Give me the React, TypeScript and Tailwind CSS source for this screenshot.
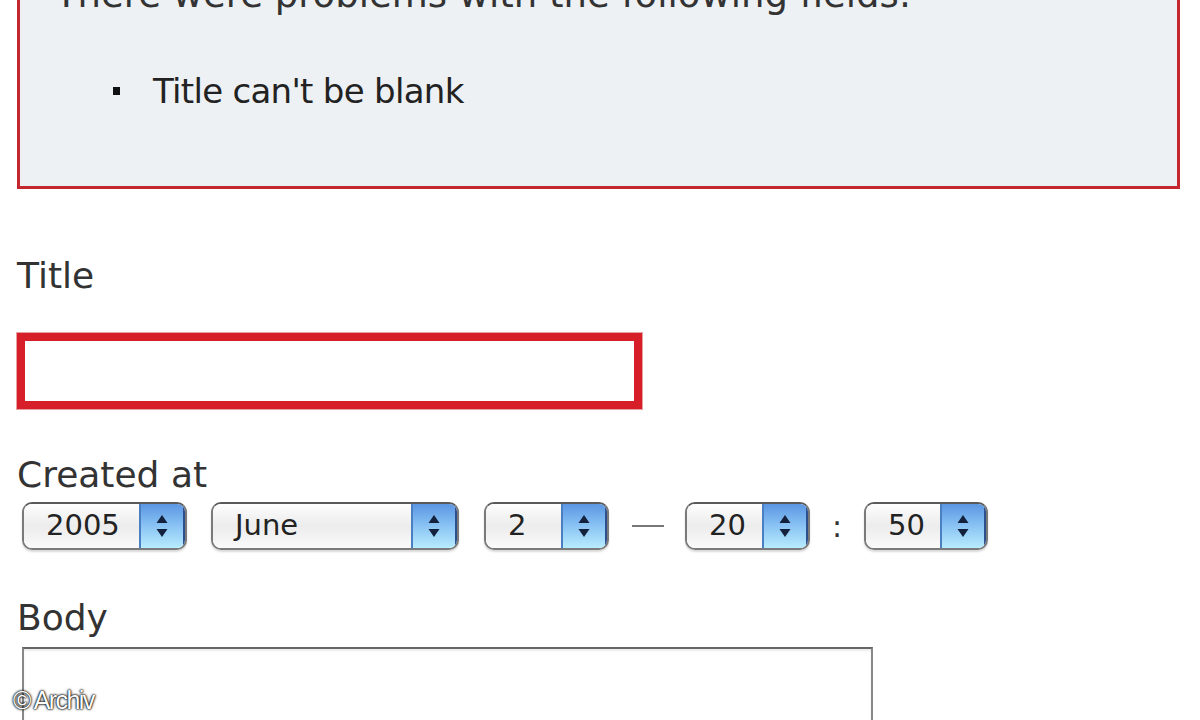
import React from "react";

function Arrows() {
  return (
    <svg width="14" height="24" viewBox="0 0 14 24" aria-hidden="true">
      <path d="M7 1 L12.5 9 L1.5 9 Z" fill="#14213c" />
      <path d="M7 23 L12.5 15 L1.5 15 Z" fill="#14213c" />
    </svg>
  );
}

function Select({ value, width }: { value: string; width: string }) {
  return (
    <div
      className={`${width} h-[48px] flex items-stretch rounded-[10px] border-2 border-[#7a7a7a] border-t-[#5a5a5a] overflow-hidden shadow-[0_2px_2px_rgba(0,0,0,0.15)]`}
    >
      <div className="flex-1 flex items-center pl-[22px] bg-gradient-to-b from-[#fdfdfd] via-[#ececec] to-[#fafafa] text-[29px] text-[#222]">
        {value}
      </div>
      <div className="w-[46px] flex items-center justify-center border-l-2 border-[#4a7fc2] border-r-2 border-r-[#2c4f8e] bg-gradient-to-b from-[#5b96e2] via-[#8ac3f4] to-[#b8ecfd]">
        <Arrows />
      </div>
    </div>
  );
}

export default function App() {
  return (
    <div className="relative w-[1200px] h-[720px] overflow-hidden bg-white font-['DejaVu_Sans',sans-serif] text-[#2a2a2a]">
      {/* Error summary */}
      <div className="ml-[17px] -mt-[40px] w-[1163px] h-[229px] border-[3px] border-[#c4272d] bg-[#edf1f4] pt-[11px] pl-[35px]">
        <h2 className="text-[37px] leading-[42px] font-normal text-[#333] whitespace-nowrap">
          There were problems with the following fields:
        </h2>
        <ul className="mt-[55px]">
          <li className="flex items-center text-[34px] leading-[40px] tracking-[-0.7px] text-[#222]">
            <span className="ml-[58px] mr-[33px] w-[7px] h-[8px] bg-[#111]" />
            Title can't be blank
          </li>
        </ul>
      </div>

      {/* Form */}
      <div className="flex flex-col pl-[17px]">
        <label className="mt-[66px] text-[36px] leading-[42px] text-[#333]">Title</label>
        <div className="mt-[36px] w-[625px] h-[76px] border-[8px] border-[#d71f29] bg-white shadow-[0_0_0_1px_#e8a0a0]" />

        <label className="mt-[45px] text-[36px] leading-[42px] text-[#333]">Created at</label>
        <div className="mt-[6px] ml-[5px] flex items-center">
          <Select value="2005" width="w-[165px]" />
          <div className="ml-[24px]">
            <Select value="June" width="w-[248px]" />
          </div>
          <div className="ml-[25px]">
            <Select value="2" width="w-[125px]" />
          </div>
          <span className="ml-[23px] mr-[21px] w-[32px] h-[2px] bg-[#777]" />
          <Select value="20" width="w-[125px]" />
          <span className="mx-[22px] text-[30px] text-[#333]">:</span>
          <Select value="50" width="w-[124px]" />
        </div>

        <label className="mt-[47px] text-[36px] leading-[42px] text-[#333]">Body</label>
        <div className="mt-[8px] ml-[5px] w-[851px] h-[120px] border-2 border-[#888] border-t-[#666] bg-white shadow-[inset_0_2px_2px_rgba(0,0,0,0.08)]" />
      </div>

      {/* Watermark */}
      <span className="absolute left-[13px] top-[682px] font-['Liberation_Sans',sans-serif] text-[25px] tracking-[-1.6px] text-white [text-shadow:0_0_3px_#000,0_0_2px_#000,0_0_1px_#000]">
        © Archiv
      </span>
    </div>
  );
}
